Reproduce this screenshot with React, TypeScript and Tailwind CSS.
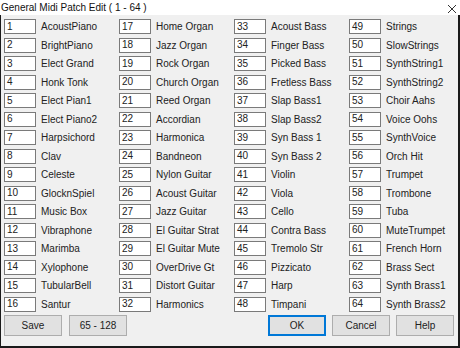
const patches = [
  "AcoustPiano", "BrightPiano", "Elect Grand", "Honk Tonk", "Elect Pian1", "Elect Piano2", "Harpsichord", "Clav",
  "Celeste", "GlocknSpiel", "Music Box", "Vibraphone", "Marimba", "Xylophone", "TubularBell", "Santur",
  "Home Organ", "Jazz Organ", "Rock Organ", "Church Organ", "Reed Organ", "Accordian", "Harmonica", "Bandneon",
  "Nylon Guitar", "Acoust Guitar", "Jazz Guitar", "El Guitar Strat", "El Guitar Mute", "OverDrive Gt", "Distort Guitar", "Harmonics",
  "Acoust Bass", "Finger Bass", "Picked Bass", "Fretless Bass", "Slap Bass1", "Slap Bass2", "Syn Bass 1", "Syn Bass 2",
  "Violin", "Viola", "Cello", "Contra Bass", "Tremolo Str", "Pizzicato", "Harp", "Timpani",
  "Strings", "SlowStrings", "SynthString1", "SynthString2", "Choir Aahs", "Voice Oohs", "SynthVoice", "Orch Hit",
  "Trumpet", "Trombone", "Tuba", "MuteTrumpet", "French Horn", "Brass Sect", "Synth Brass1", "Synth Brass2",
];

const font = { fontFamily: '"Liberation Sans Narrow", "Liberation Sans", Arial, sans-serif' };

function DialogButton({ label, primary }: { label: string; primary?: boolean }) {
  return (
    <div
      className={`w-[58px] h-[21px] flex items-center justify-center bg-[#e1e1e1] text-[10px] text-[#222] ${
        primary ? "border-2 border-[#0078d7]" : "border border-[#adadad]"
      }`}
    >
      {label}
    </div>
  );
}

export default function App() {
  const columns = [0, 1, 2, 3].map((c) => patches.slice(c * 16, c * 16 + 16));

  return (
    <div className="w-[460px] h-[348px] flex flex-col bg-[#f0f0f0] overflow-hidden" style={font}>
      <div className="h-[15px] bg-white flex items-center justify-between pl-[1px] pr-[3px]">
        <span className="text-[10px] text-[#111] leading-none mt-[1px]">General Midi Patch Edit ( 1 - 64 )</span>
        <svg width="10" height="10" viewBox="0 0 10 10" className="mt-[2px]">
          <path d="M1 1 L9 9 M9 1 L1 9" stroke="#333" strokeWidth="1" />
        </svg>
      </div>
      <div className="flex-1 flex flex-col border-l border-r-2 border-b-2 border-[#1a1a1a] pl-[3px] pt-[4px]">
        <div className="grid grid-cols-[repeat(4,115px)]">
          {columns.map((col, c) => (
            <div key={c} className="flex flex-col gap-[3.5px]">
              {col.map((name, r) => (
                <div key={r} className="flex items-center h-[15px]">
                  <div className="w-[32px] h-[15px] bg-white border border-[#7a7a7a] text-[10px] leading-none flex items-center pl-[2px] text-[#222]">
                    {c * 16 + r + 1}
                  </div>
                  <span className="ml-[5px] text-[10px] text-[#222] whitespace-nowrap">{name}</span>
                </div>
              ))}
            </div>
          ))}
        </div>
        <div className="flex items-center mt-[3px]">
          <DialogButton label="Save" />
          <div className="ml-[7px]">
            <DialogButton label="65 - 128" />
          </div>
          <div className="ml-[141px] flex gap-[6px]">
            <DialogButton label="OK" primary />
            <DialogButton label="Cancel" />
            <DialogButton label="Help" />
          </div>
        </div>
      </div>
    </div>
  );
}
